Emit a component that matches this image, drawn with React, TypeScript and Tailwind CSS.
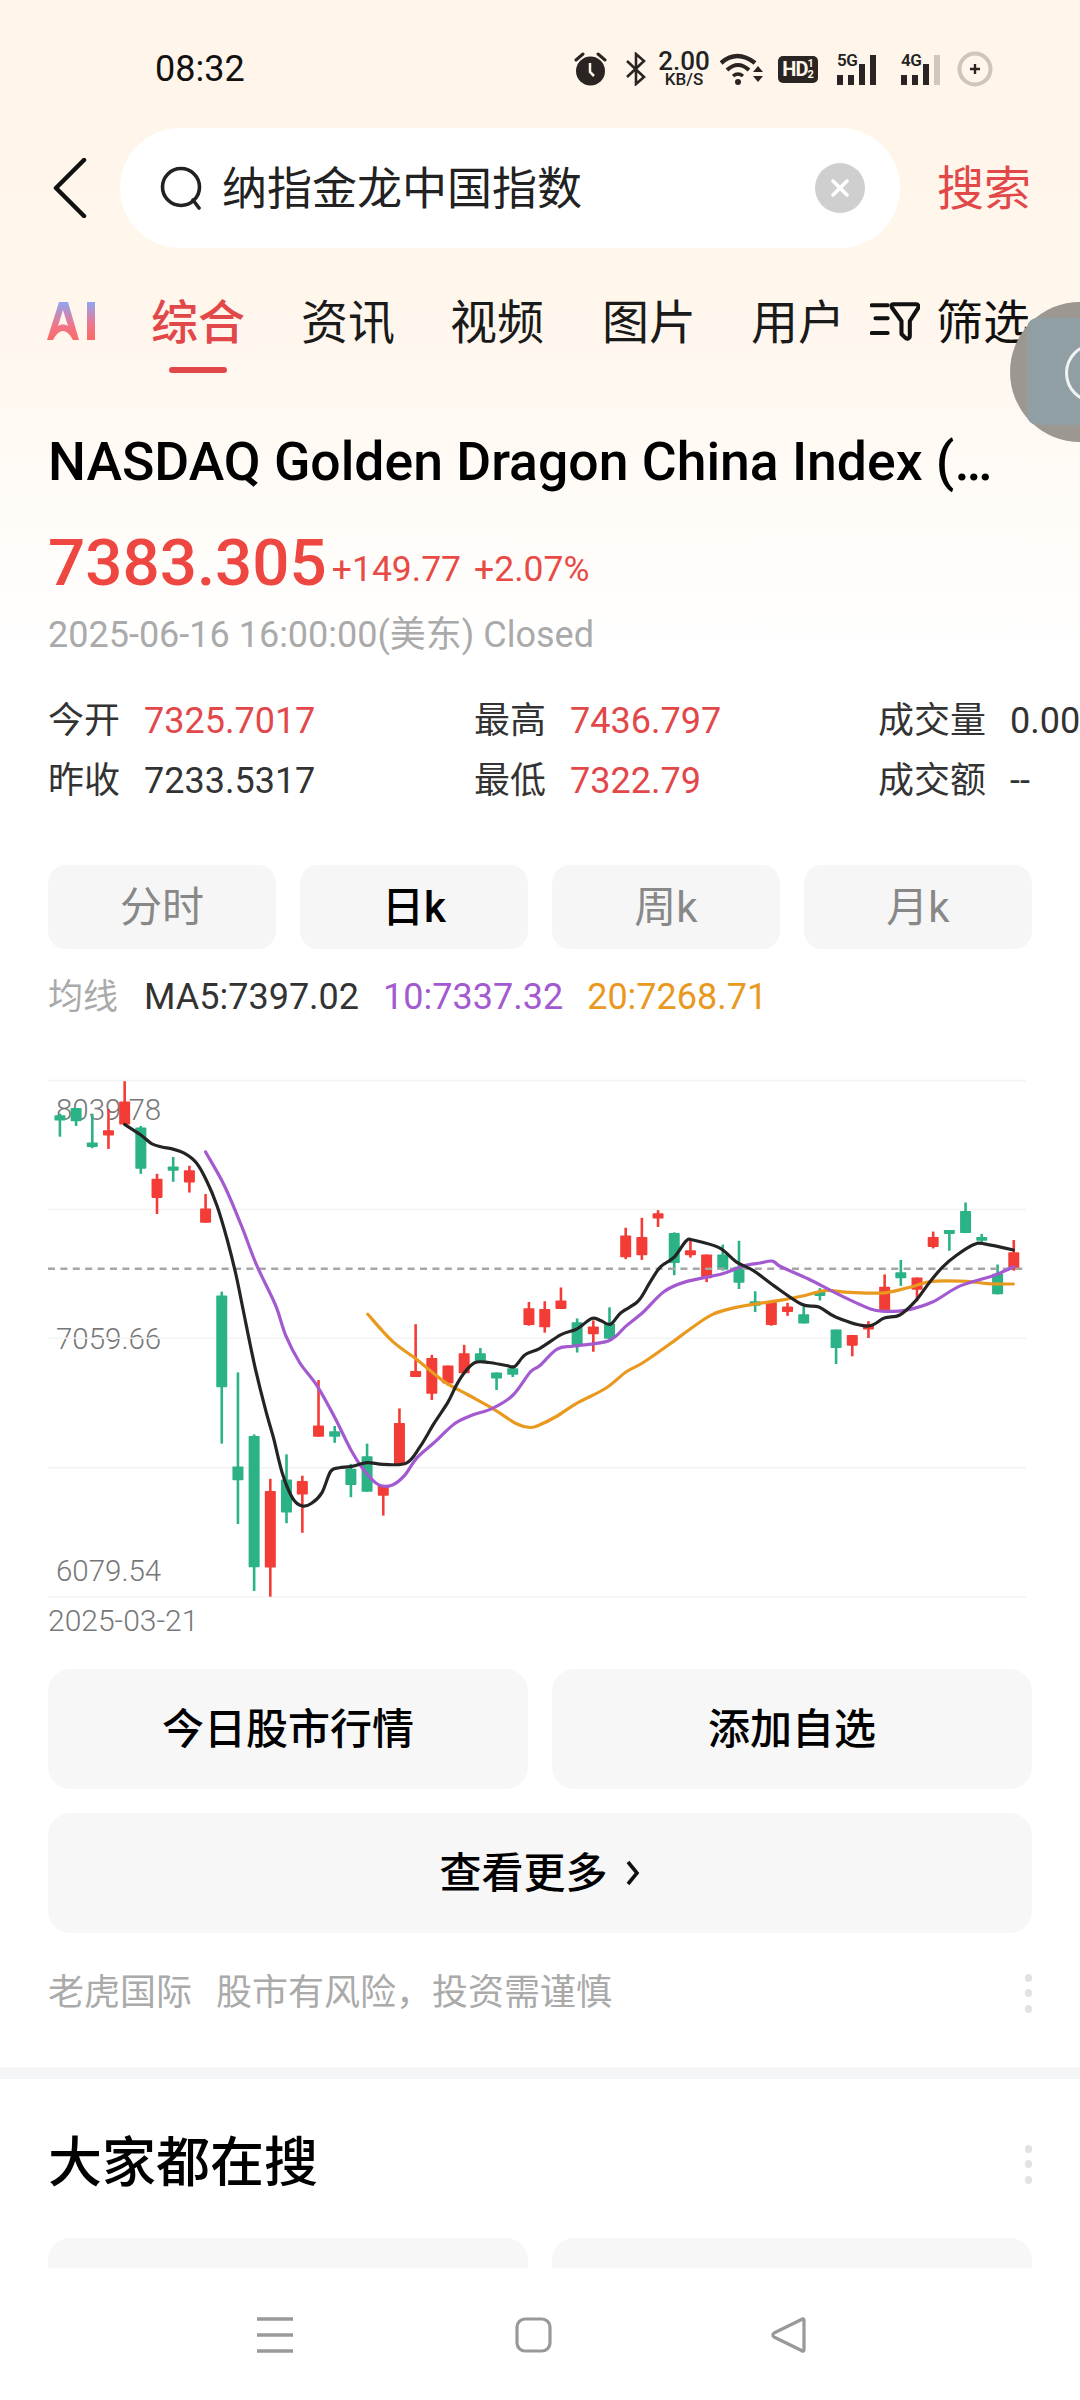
import React from "react";

// chart data was read off a zoomed crop, so x/y get scaled back to page pixels below
const SX = 2.904;
const SY = 2.613;
const G = "#2bb287";
const R = "#f43c37";

type Candle = [string, number, number, number, number, number];

const candles: Candle[] = [
  [G, 174, 190, 250, 194, 208], [G, 221, 175, 222, 175, 210], [G, 268, 190, 280, 265, 277],
  [R, 315, 178, 282, 233, 247], [R, 362, 105, 220, 158, 218], [G, 409, 222, 347, 226, 334],
  [R, 456, 347, 452, 360, 410], [G, 503, 303, 368, 328, 339], [R, 550, 326, 396, 338, 370],
  [R, 597, 400, 475, 438, 475], [G, 644, 655, 1052, 665, 905], [G, 691, 866, 1262, 1112, 1148],
  [G, 738, 1028, 1437, 1032, 1375], [R, 785, 1144, 1452, 1176, 1376], [G, 832, 1080, 1260, 1146, 1232],
  [R, 878, 1136, 1285, 1150, 1185], [R, 925, 886, 1034, 1005, 1034], [G, 972, 1006, 1050, 1020, 1034],
  [G, 1019, 1105, 1192, 1118, 1160], [G, 1066, 1052, 1178, 1085, 1178], [R, 1113, 1160, 1240, 1162, 1188],
  [R, 1160, 960, 1105, 998, 1105], [R, 1207, 740, 878, 862, 878], [R, 1254, 820, 938, 828, 922],
  [R, 1301, 848, 900, 848, 895], [R, 1348, 794, 868, 816, 868], [G, 1395, 802, 840, 816, 838],
  [G, 1442, 866, 912, 866, 882], [G, 1489, 850, 878, 855, 872], [R, 1536, 682, 744, 698, 742],
  [R, 1582, 680, 762, 700, 748], [R, 1629, 644, 700, 678, 700], [G, 1676, 725, 814, 735, 795],
  [R, 1723, 730, 812, 746, 766], [G, 1770, 696, 780, 738, 778], [R, 1817, 488, 570, 508, 565],
  [R, 1864, 462, 572, 512, 560], [R, 1911, 442, 486, 450, 464], [G, 1958, 500, 612, 502, 580],
  [R, 2005, 522, 566, 547, 560], [R, 2052, 558, 630, 558, 620], [G, 2099, 532, 600, 558, 598],
  [G, 2146, 522, 648, 590, 632], [G, 2193, 654, 708, 680, 692], [R, 2240, 682, 744, 682, 742],
  [R, 2287, 684, 718, 694, 708], [G, 2334, 690, 738, 714, 738], [G, 2381, 646, 678, 654, 666],
  [G, 2428, 754, 844, 754, 802], [R, 2475, 768, 824, 768, 796], [R, 2522, 732, 776, 740, 754],
  [R, 2569, 610, 710, 642, 708], [G, 2616, 572, 640, 604, 620], [R, 2663, 618, 680, 618, 650],
  [R, 2710, 498, 542, 512, 538], [G, 2757, 494, 548, 494, 504], [G, 2804, 422, 502, 444, 502],
  [G, 2851, 504, 528, 512, 522], [G, 2897, 584, 662, 608, 662], [R, 2944, 520, 600, 552, 598],
];

const ma5 = [
  [362, 218], [408, 245], [440, 268], [470, 277], [500, 282], [535, 293], [570, 318], [600, 365], [630, 430],
  [660, 520], [685, 610], [710, 720], [740, 850], [770, 960], [795, 1040], [820, 1130], [850, 1195], [878, 1215],
  [905, 1208], [935, 1180], [960, 1125], [985, 1115], [1020, 1112], [1066, 1102], [1113, 1106], [1180, 1103],
  [1220, 1060], [1260, 1000], [1300, 945], [1325, 900], [1350, 865], [1380, 840], [1420, 840], [1470, 848],
  [1495, 850], [1525, 820], [1568, 803], [1628, 768], [1676, 752], [1718, 725], [1743, 730], [1773, 740],
  [1803, 710], [1853, 680], [1888, 630], [1918, 590], [1958, 565], [1993, 522], [2013, 520], [2088, 540],
  [2138, 577], [2188, 600], [2248, 640], [2328, 688], [2378, 695], [2428, 722], [2518, 745], [2568, 724],
  [2613, 716], [2658, 680], [2698, 632], [2738, 590], [2778, 560], [2828, 532], [2858, 530], [2943, 546],
];

const ma10 = [
  [597, 290], [650, 375], [700, 480], [745, 585], [800, 690], [830, 770], [870, 840], [920, 900], [970, 980],
  [1020, 1070], [1060, 1125], [1100, 1160], [1140, 1160], [1175, 1135], [1210, 1090], [1260, 1050], [1320, 1000],
  [1370, 978], [1430, 960], [1490, 925], [1540, 865], [1568, 848], [1618, 805], [1668, 797], [1768, 783],
  [1818, 745], [1868, 708], [1928, 655], [1988, 630], [2098, 608], [2158, 588], [2208, 580], [2243, 575],
  [2268, 590], [2348, 622], [2448, 668], [2528, 700], [2568, 706], [2628, 704], [2708, 682], [2788, 640],
  [2888, 612], [2943, 590],
];

const ma20 = [
  [1068, 714], [1140, 785], [1210, 832], [1290, 890], [1360, 925], [1430, 960], [1500, 1000], [1540, 1010],
  [1568, 1003], [1618, 980], [1678, 945], [1758, 908], [1818, 865], [1868, 840], [1948, 790], [2008, 750],
  [2068, 715], [2128, 698], [2188, 688], [2268, 677], [2338, 665], [2398, 652], [2468, 657], [2568, 658],
  [2648, 642], [2708, 628], [2808, 628], [2868, 634], [2943, 635],
];

const gridLines = [103, 440, 777, 1115, 1453];

// catmull-rom through the points
function smooth(points: number[][]) {
  const p = points.map(([x, y]) => [x / SX, y / SY]);
  let d = `M${p[0][0].toFixed(1)} ${p[0][1].toFixed(1)}`;
  for (let i = 0; i < p.length - 1; i++) {
    const a = p[Math.max(i - 1, 0)];
    const b = p[i];
    const c = p[i + 1];
    const e = p[Math.min(i + 2, p.length - 1)];
    const c1x = b[0] + (c[0] - a[0]) / 6;
    const c1y = b[1] + (c[1] - a[1]) / 6;
    const c2x = c[0] - (e[0] - b[0]) / 6;
    const c2y = c[1] - (e[1] - b[1]) / 6;
    d += `C${c1x.toFixed(1)} ${c1y.toFixed(1)} ${c2x.toFixed(1)} ${c2y.toFixed(1)} ${c[0].toFixed(1)} ${c[1].toFixed(1)}`;
  }
  return d;
}

const StatusIcons = () => (
  <div className="flex h-[36px] items-center text-[#222]">
    <svg width="33" height="34" viewBox="0 0 33 34" className="ml-[574px]">
      <circle cx="16.5" cy="19" r="14.5" fill="#2a2522" />
      <path d="M16 11v9l4 4" stroke="#fff5ea" strokeWidth="2.5" fill="none" />
      <path d="M2 8l7-6M31 8l-7-6" stroke="#2a2522" strokeWidth="3" strokeLinecap="round" />
    </svg>
    <svg width="22" height="34" viewBox="0 0 22 34" className="ml-[18px]">
      <path d="M2 9l17 16-8 7V2l8 7L2 25" stroke="#2a2522" strokeWidth="2.6" fill="none" />
    </svg>
    <div className="ml-[10px] flex w-[54px] flex-col items-center">
      <span className="text-[26px] leading-[21px] font-medium">2.00</span>
      <span className="text-[17px] leading-[15px] font-medium">KB/S</span>
    </div>
    <svg width="44" height="34" viewBox="0 0 44 34" className="ml-[9px]">
      <path d="M1 11Q17-3 35 11" stroke="#2a2522" strokeWidth="4.5" fill="none" />
      <path d="M7 18Q18 8 29 18" stroke="#2a2522" strokeWidth="4" fill="none" />
      <path d="M13 24Q18 20 23 24" stroke="#2a2522" strokeWidth="3.5" fill="none" />
      <circle cx="18" cy="30" r="3" fill="#2a2522" />
      <path d="M33 20h10l-5-6zM33 24h10l-5 6z" fill="#2a2522" />
    </svg>
    <div className="ml-[14px] flex h-[27px] w-[40px] items-center justify-center rounded-[5px] bg-[#2a2522] text-[#fff5ea]">
      <span className="text-[20px] leading-none font-bold tracking-[-1px]">HD</span>
      <span className="flex flex-col text-[11px] leading-[11px] font-bold">
        <span>1</span>
        <span>2</span>
      </span>
    </div>
    <div className="relative ml-[19px] flex h-[32px] w-[46px] items-end gap-[5px]">
      <span className="absolute top-[-1px] left-0 text-[17px] leading-[17px] font-semibold tracking-[-0.5px]">5G</span>
      <div className="h-[10px] w-[6px] bg-[#2a2522]" />
      <div className="h-[10px] w-[6px] bg-[#2a2522]" />
      <div className="h-[21px] w-[6px] bg-[#2a2522]" />
      <div className="h-[30px] w-[6px] bg-[#2a2522]" />
    </div>
    <div className="relative ml-[18px] flex h-[32px] w-[46px] items-end gap-[5px]">
      <span className="absolute top-[-1px] left-0 text-[17px] leading-[17px] font-semibold tracking-[-0.5px]">4G</span>
      <div className="h-[10px] w-[6px] bg-[#2a2522]" />
      <div className="h-[10px] w-[6px] bg-[#2a2522]" />
      <div className="h-[21px] w-[6px] bg-[#2a2522]" />
      <div className="h-[30px] w-[6px] bg-[#cfc8bf]" />
    </div>
    <svg width="36" height="36" viewBox="0 0 36 36" className="ml-[10px]">
      <circle cx="18" cy="18" r="15.5" stroke="#cdc6bb" strokeWidth="4" fill="none" />
      <path d="M13 18h10M18 13v10" stroke="#2a2522" strokeWidth="2.4" />
    </svg>
  </div>
);

const Chevron = () => (
  <svg width="34" height="60" viewBox="0 0 34 60" className="ml-[53px]">
    <path d="M31 2L3 30l28 28" stroke="#111" strokeWidth="4.5" fill="none" strokeLinecap="round" strokeLinejoin="round" />
  </svg>
);

const Dots = () => (
  <div className="flex flex-col gap-[7.5px]">
    <div className="h-[8px] w-[7px] rounded-full bg-[#e2e2e2]" />
    <div className="h-[8px] w-[7px] rounded-full bg-[#e2e2e2]" />
    <div className="h-[8px] w-[7px] rounded-full bg-[#e2e2e2]" />
  </div>
);

const tabs = [
  { label: "资讯", ml: "ml-[56px]" },
  { label: "视频", ml: "ml-[55px]" },
  { label: "图片", ml: "ml-[58px]" },
  { label: "用户", ml: "ml-[55px]" },
];

const stats = [
  [["今开", "7325.7017", true], ["最高", "7436.797", true], ["成交量", "0.00", false]],
  [["昨收", "7233.5317", false], ["最低", "7322.79", true], ["成交额", "--", false]],
] as [string, string, boolean][][];

const periods = ["分时", "日k", "周k", "月k"];

const Chart = () => (
  <div className="relative h-[565px]">
    <span className="absolute top-[54px] left-[56px] text-[29.5px] leading-[30px] font-light text-[#777]">8039.78</span>
    <span className="absolute top-[283px] left-[56px] text-[29.5px] leading-[30px] font-light text-[#777]">7059.66</span>
    <span className="absolute top-[515px] left-[56px] text-[29.5px] leading-[30px] font-light text-[#777]">6079.54</span>
    <svg width="1080" height="565" viewBox="0 0 1080 565" className="absolute top-0 left-0">
      {gridLines.map((y) => (
        <line key={y} x1="48" x2="1026" y1={y / SY} y2={y / SY} stroke="#f3f3f3" strokeWidth="1.5" />
      ))}
      {candles.map(([color, x, wt, wb, bt, bb]) => (
        <g key={x} fill={color}>
          <rect x={x / SX - 1.3} y={wt / SY} width="2.6" height={(wb - wt) / SY} />
          <rect x={x / SX - 5.5} y={bt / SY} width="11" height={(bb - bt) / SY} rx="0.8" />
        </g>
      ))}
      <line x1="48" x2="1026" y1={595 / SY} y2={595 / SY} stroke="#a6a6a6" strokeWidth="2.4" strokeDasharray="7 5.4" />
      <path d={smooth(ma20)} stroke="#e8991e" strokeWidth="3.2" fill="none" strokeLinecap="round" />
      <path d={smooth(ma10)} stroke="#a35ad0" strokeWidth="3.2" fill="none" strokeLinecap="round" />
      <path d={smooth(ma5)} stroke="#242424" strokeWidth="3.2" fill="none" strokeLinecap="round" />
    </svg>
  </div>
);

export default function App() {
  return (
    <div className="relative flex h-[2400px] w-[1080px] flex-col overflow-hidden bg-white font-[Roboto,'Noto_Sans_CJK_SC',sans-serif] text-[#111]">
      <div className="h-[2268px] overflow-hidden bg-[linear-gradient(180deg,#fff5ea_0,#fff6ec_300px,#ffffff_650px)]">
        {/* status bar */}
        <div className="relative flex h-[128px] items-start pt-[51px]">
          <span className="absolute top-[49px] left-[155px] text-[36px] leading-[40px] text-[#111]">08:32</span>
          <StatusIcons />
        </div>

        {/* search */}
        <div className="flex h-[120px] items-center">
          <Chevron />
          <div className="ml-[33px] flex h-[120px] w-[780px] items-center rounded-full bg-white pl-[40px]">
            <svg width="44" height="44" viewBox="0 0 44 44">
              <circle cx="21" cy="21" r="18.5" stroke="#222" strokeWidth="3.6" fill="none" />
              <path d="M33 34l6 8" stroke="#222" strokeWidth="3.6" strokeLinecap="round" />
            </svg>
            <span className="mt-[2px] ml-[18px] w-[593px] text-[45px] leading-none text-[#222]">纳指金龙中国指数</span>
            <div className="flex h-[50px] w-[50px] items-center justify-center rounded-full bg-[#cfcfcf]">
              <svg width="24" height="24" viewBox="0 0 24 24">
                <path d="M5 5l14 14M19 5L5 19" stroke="#fff" strokeWidth="3.6" strokeLinecap="round" />
              </svg>
            </div>
          </div>
          <span className="ml-[37px] text-[47px] leading-none text-[#e2484a]">搜索</span>
        </div>

        {/* tabs */}
        <div className="relative flex h-[127px] items-start pt-[51px]">
          <svg width="50" height="44" viewBox="0 0 50 44" className="mt-[1px] ml-[47px]">
            <defs>
              <linearGradient id="aiLogo" x1="0" y1="0" x2="0" y2="1">
                <stop offset="0" stopColor="#8fa5f5" />
                <stop offset="0.6" stopColor="#f0768a" />
                <stop offset="1" stopColor="#fa6a66" />
              </linearGradient>
            </defs>
            <path d="M12 2h9l11 38h-6c-3-6-7-9-10-9s-7 3-10 9H0zM16 10l-5 16c2-1 3-1.500 5-1.500s3 .5 5 1.500z" fill="url(#aiLogo)" fillRule="evenodd" />
            <rect x="40" y="2" width="8" height="38" fill="url(#aiLogo)" />
          </svg>
          <div className="ml-[54px] flex flex-col items-center">
            <span className="text-[47px] leading-[47px] font-medium text-[#e2484a]">综合</span>
            <div className="mt-[21px] h-[6px] w-[58px] rounded-full bg-[#e2484a]" />
          </div>
          {tabs.map((t) => (
            <span key={t.label} className={`${t.ml} text-[47px] leading-[47px] text-[#1a1a1a]`}>
              {t.label}
            </span>
          ))}
          <svg width="50" height="44" viewBox="0 0 54 46" className="ml-[25px]">
            <path d="M2 6h17M6 20h13M2 36h17" stroke="#111" strokeWidth="4.5" strokeLinecap="round" />
            <path d="M25 5h25c2 0 3 2 2 4L43 23v16c0 3-3 4-5 2l-4-4V23L24 9c-1-2-1-4 1-4z" stroke="#111" strokeWidth="4.4" fill="none" strokeLinejoin="round" />
          </svg>
          <span className="ml-[16px] text-[47px] leading-[47px] text-[#111]">筛选</span>
        </div>

        {/* quote header */}
        <div className="px-[48px]">
          <div className="mt-[57px] text-[53.5px] leading-[60px] font-medium whitespace-nowrap text-black">
            NASDAQ Golden Dragon China Index (…
          </div>
          <div className="mt-[31px] flex h-[80px] items-center">
            <span className="text-[65.5px] leading-none font-medium text-[#ee4640]">7383.305</span>
            <span className="mt-[14px] ml-[5px] text-[35.5px] leading-none text-[#e84a45]">+149.77</span>
            <span className="mt-[14px] ml-[13px] text-[35.5px] leading-none text-[#e84a45]">+2.07%</span>
          </div>
          <div className="mt-[10px] text-[36px] leading-[44px] text-[#aaa]">2025-06-16 16:00:00(美东) Closed</div>

          <div className="mt-[44px] flex flex-col gap-[20px]">
            {stats.map((row, i) => (
              <div key={i} className="grid grid-cols-[426px_404px_1fr] text-[36px] leading-[40px] whitespace-nowrap">
                {row.map(([label, value, red]) => (
                  <div key={label} className="flex">
                    <span className={label.length === 3 ? "w-[132px] text-[#333]" : "w-[96px] text-[#333]"}>{label}</span>
                    <span className={red ? "text-[#e2484a]" : "text-[#333]"}>{value}</span>
                  </div>
                ))}
              </div>
            ))}
          </div>

          <div className="mt-[64px] grid grid-cols-4 gap-[24px]">
            {periods.map((p) => (
              <div
                key={p}
                className={`flex h-[84px] items-center justify-center rounded-[18px] bg-[#f6f6f6] text-[42px] ${
                  p === "日k" ? "font-medium text-black" : "text-[#888]"
                }`}
              >
                {p}
              </div>
            ))}
          </div>

          <div className="mt-[28px] flex h-[40px] items-center text-[36px] leading-none whitespace-nowrap">
            <span className="w-[96px] text-[35px] text-[#aaa]">均线</span>
            <span className="text-[#333]">MA5:7397.02</span>
            <span className="ml-[24px] text-[#a35ad0]">10:7337.32</span>
            <span className="ml-[24px] text-[#e8991e]">20:7268.71</span>
          </div>
        </div>

        <div className="h-[24px]" />
        <Chart />

        <div className="px-[48px]">
          <div className="text-[30px] leading-[30px] font-light text-[#777]">2025-03-21</div>

          <div className="mt-[33px] grid grid-cols-2 gap-[24px]">
            <div className="flex h-[120px] items-center justify-center rounded-[22px] bg-[#f7f7f7] text-[42px] font-medium text-black">
              今日股市行情
            </div>
            <div className="flex h-[120px] items-center justify-center rounded-[22px] bg-[#f7f7f7] text-[42px] font-medium text-black">
              添加自选
            </div>
          </div>
          <div className="mt-[24px] flex h-[120px] items-center justify-center rounded-[22px] bg-[#f7f7f7] text-[42px] font-medium text-black">
            查看更多
            <svg width="16" height="26" viewBox="0 0 16 26" className="ml-[17px]">
              <path d="M3 2l9 11-9 11" stroke="#111" strokeWidth="3.6" fill="none" />
            </svg>
          </div>

          <div className="mt-[38px] flex items-center justify-between text-[36px] leading-[44px] text-[#aaa]">
            <div>
              <span>老虎国际</span>
              <span className="ml-[24px]">股市有风险，投资需谨慎</span>
            </div>
            <Dots />
          </div>
        </div>

        <div className="mt-[52px] h-[12px] bg-[#f4f5f7]" />

        <div className="px-[48px]">
          <div className="mt-[55px] flex items-center justify-between">
            <span className="text-[54px] leading-[60px] font-medium text-black">大家都在搜</span>
            <Dots />
          </div>
          <div className="mt-[44px] grid grid-cols-2 gap-[24px]">
            <div className="h-[120px] rounded-[22px] bg-[#f7f7f7]" />
            <div className="h-[120px] rounded-[22px] bg-[#f7f7f7]" />
          </div>
        </div>
      </div>

      {/* android nav */}
      <div className="flex h-[132px] items-start bg-white pt-[49px]">
        <svg width="38" height="36" viewBox="0 0 38 36" className="ml-[256px]">
          <path d="M1 2h36M1 18h36M1 34h36" stroke="#999" strokeWidth="3.4" />
        </svg>
        <svg width="38" height="36" viewBox="0 0 38 36" className="ml-[221px]">
          <rect x="2" y="2" width="33" height="32" rx="8" stroke="#999" strokeWidth="3.2" fill="none" />
        </svg>
        <svg width="38" height="36" viewBox="0 0 38 36" className="ml-[218px]">
          <path d="M33 3v30c0 1.500-1.500 1.500-2.500.5L3 20c-1.500-1-1.500-3 0-4L30.500 2.500c1-1 2.500-1 2.500.5z" stroke="#999" strokeWidth="3.2" fill="none" strokeLinejoin="round" />
        </svg>
      </div>

      {/* floating ball from the recording overlay */}
      <div className="absolute top-[302px] left-[1010px] h-[140px] w-[140px] rounded-full bg-[#9c9791]">
        <div className="absolute top-[16px] left-[17px] h-[107px] w-[130px] rounded-[10px] bg-[#8f9fa3]" />
        <div className="absolute top-[41px] left-[55px] h-[60px] w-[60px] rounded-full border-[3px] border-[#f1f3f3]" />
      </div>
    </div>
  );
}
